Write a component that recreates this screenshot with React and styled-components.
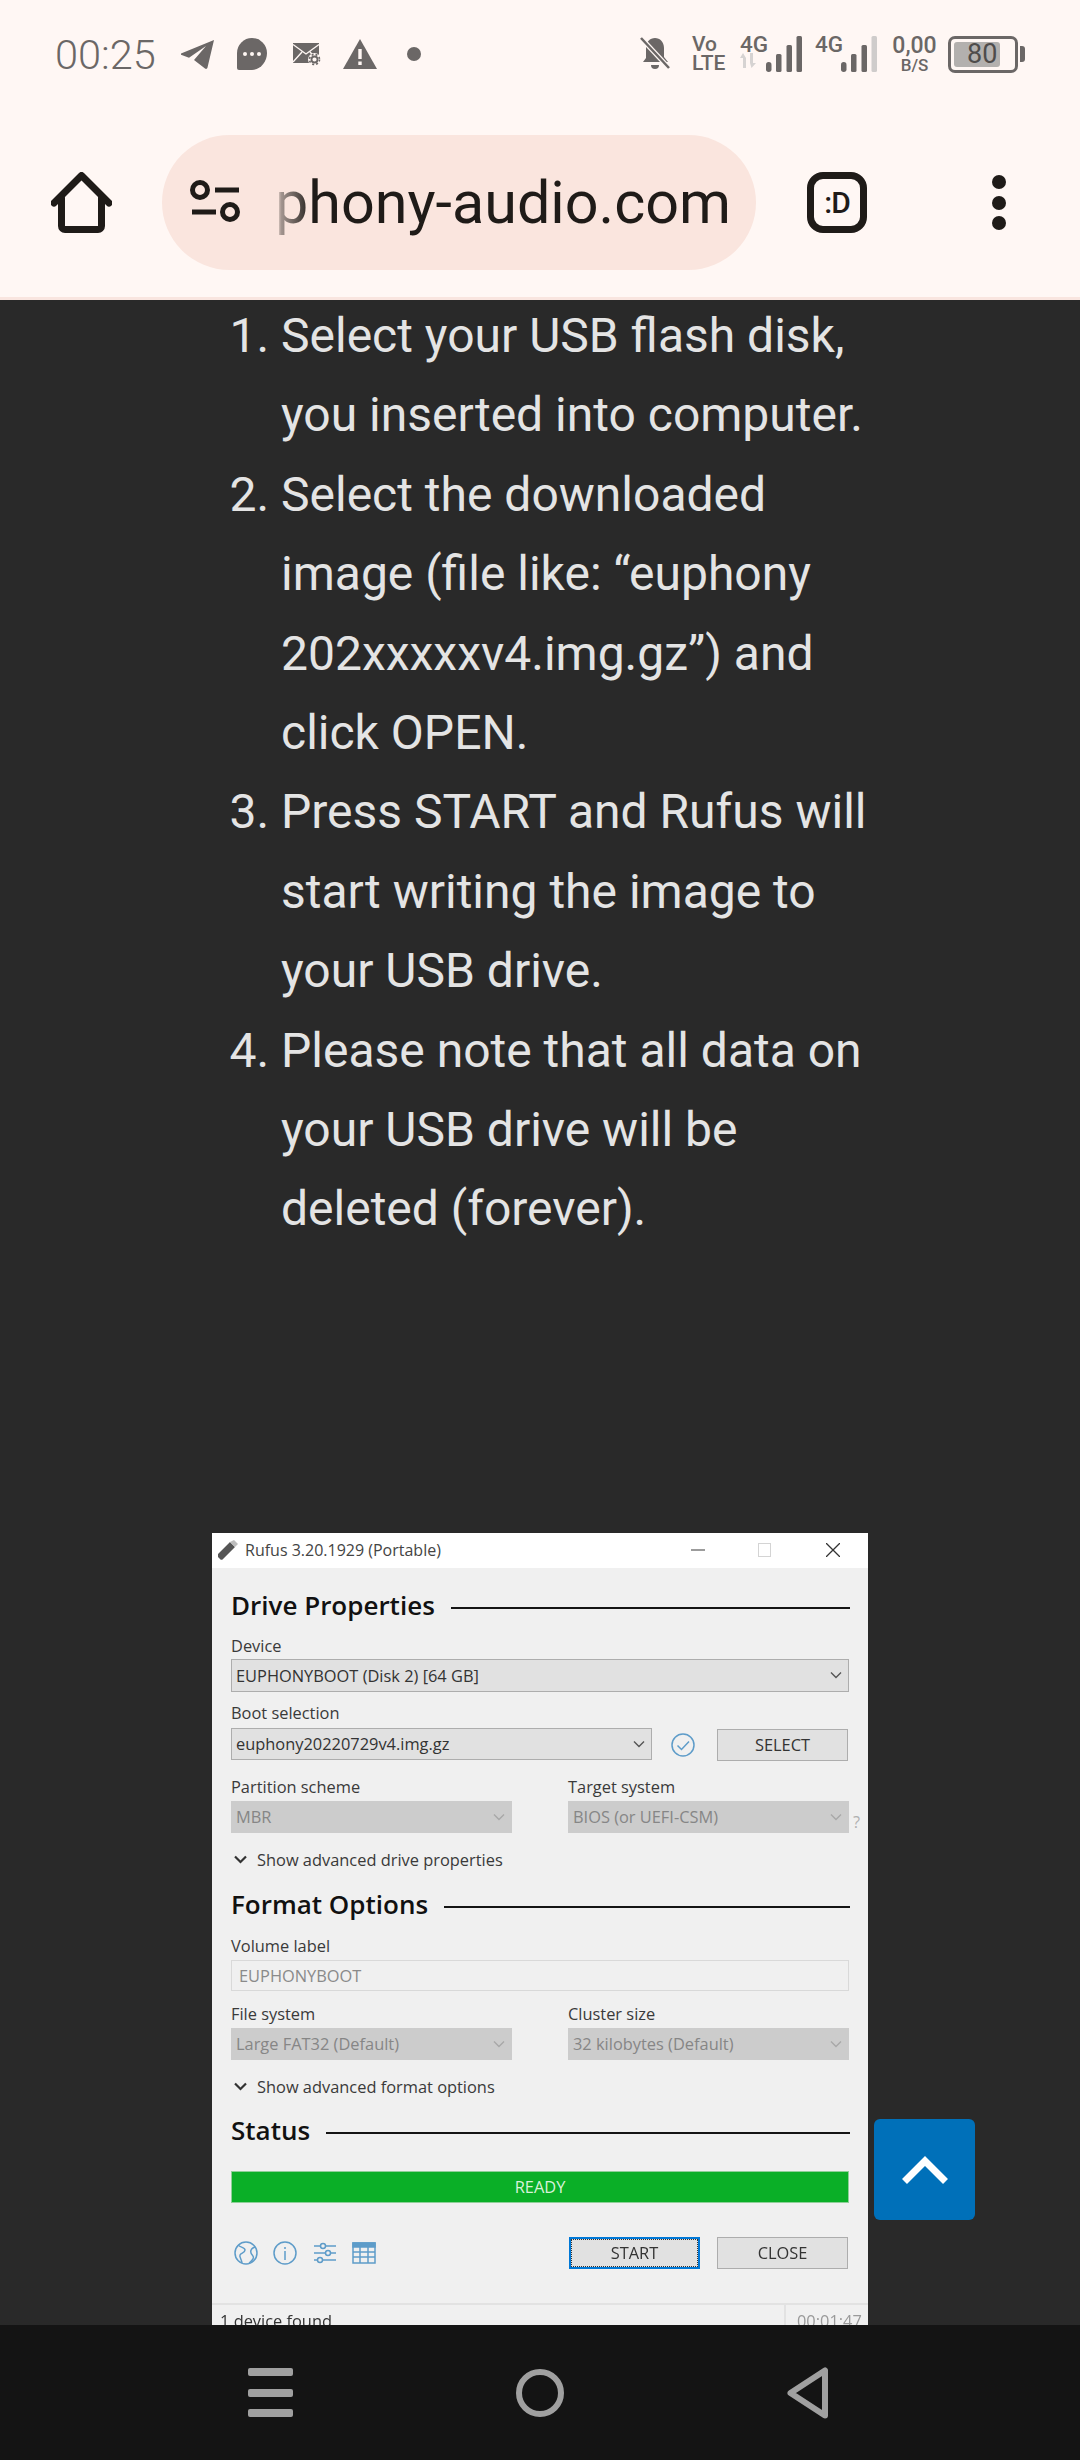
import React from "react";
import styled, { createGlobalStyle } from "styled-components";

const GlobalStyle = createGlobalStyle`
  html, body {
    margin: 0;
    padding: 0;
    background: #292929;
  }
  * {
    box-sizing: border-box;
  }
`;

const Screen = styled.div`
  width: 1080px;
  height: 2460px;
  display: flex;
  flex-direction: column;
  overflow: hidden;
  font-family: Roboto, "Liberation Sans", sans-serif;
`;

/* browser chrome */
const Header = styled.header`
  height: 300px;
  flex: none;
  background: #fff7f4;
  border-bottom: 3px solid #f9e5df;
`;

const StatusBar = styled.div`
  height: 108px;
  padding: 0 55px 0 55px;
  display: flex;
  align-items: center;
  justify-content: space-between;
  color: #6b6766;
`;

const StatusGroup = styled.div`
  display: flex;
  align-items: center;
`;

const Time = styled.span`
  font-size: 41.5px;
  font-weight: 300;
  width: 101px;
  margin-right: 25px;
  white-space: nowrap;
`;

const StatusIcon = styled.svg`
  display: block;
  flex: none;
  margin-right: ${(props) => props.$gap || 0}px;
  fill: currentColor;
`;

const StackText = styled.div`
  display: flex;
  flex-direction: column;
  align-items: ${(props) => props.$align || "flex-start"};
  width: ${(props) => props.$width}px;
  margin-right: ${(props) => props.$gap}px;
  font-weight: 500;
  line-height: 1;
`;

const StackLine = styled.span`
  font-size: ${(props) => props.$size}px;
  height: ${(props) => props.$height}px;
  line-height: ${(props) => props.$height}px;
`;

const Network = styled.div`
  display: flex;
  align-items: flex-end;
  margin-right: ${(props) => props.$gap}px;
`;

const NetworkLabel = styled.div`
  width: 26px;
  height: 36px;
  font-size: 22.5px;
  font-weight: 500;
  line-height: 17px;
  white-space: nowrap;
`;

const Battery = styled.div`
  width: 70px;
  height: 37px;
  padding: 3px;
  border: 3px solid #6b6766;
  border-radius: 7px;
`;

const BatteryFill = styled.div`
  width: 46px;
  height: 25px;
  background: #b3b0ae;
  border-radius: 3px;
  font-size: 27px;
  line-height: 25px;
  color: #4f4c4b;
  white-space: nowrap;
  padding-left: 13px;
`;

const BatteryTip = styled.div`
  width: 5px;
  height: 16px;
  margin-left: 2px;
  background: #6b6766;
  border-radius: 0 3px 3px 0;
`;

const Toolbar = styled.div`
  height: 135px;
  margin-top: 27px;
  padding-left: 51px;
  display: flex;
  align-items: center;
  color: #1f1b18;
`;

const UrlPill = styled.div`
  position: relative;
  width: 594px;
  height: 135px;
  margin: 0 51px 0 50px;
  padding-left: 28px;
  display: flex;
  align-items: center;
  background: #fae5de;
  border-radius: 68px;
`;

const UrlText = styled.span`
  margin-left: 34px;
  font-size: 59.3px;
  color: #1f1b18;
  white-space: nowrap;
`;

const UrlFade = styled.div`
  position: absolute;
  left: 114px;
  top: 30px;
  width: 36px;
  height: 75px;
  background: linear-gradient(90deg, #fae5de 0%, rgba(250, 229, 222, 0.6) 15%, rgba(250, 229, 222, 0) 100%);
`;

const TabCount = styled.div`
  width: 60px;
  height: 61px;
  flex: none;
  border: 7px solid #1f1b18;
  border-radius: 16px;
  display: flex;
  align-items: center;
  justify-content: center;
  font-size: 30px;
  font-weight: 500;
  letter-spacing: -1px;
`;

const MenuDots = styled.div`
  margin-left: 125px;
  display: flex;
  flex-direction: column;
  gap: 6.5px;
`;

const MenuDot = styled.span`
  display: block;
  width: 14px;
  height: 14px;
  border-radius: 50%;
  background: ${(props) => props.$color || "#1f1b18"};
`;

/* page content */
const Main = styled.main`
  position: relative;
  flex: 1;
  min-height: 0;
  overflow: hidden;
  background: #292929;
`;

const Steps = styled.ol`
  width: 600px;
  margin: -4px 0 0 281px;
  padding: 0;
  font-size: 48px;
  line-height: 79.4px;
  color: #e4e4e4;
`;

const BackToTop = styled.div`
  position: absolute;
  left: 874px;
  top: 1819px;
  width: 101px;
  height: 101px;
  display: flex;
  align-items: center;
  justify-content: center;
  background: #0070b9;
  border-radius: 6px;
`;

/* rufus screenshot */
const Win = styled.div`
  width: 656px;
  margin: 284px 0 0 212px;
  background: #f0f0f0;
  font-family: "Open Sans", "Noto Sans", sans-serif;
  font-size: 16.4px;
  color: #333;
  filter: blur(0.35px);
`;

const TitleBar = styled.div`
  height: 35px;
  background: #fff;
  display: flex;
  align-items: center;
  padding-left: 5px;
  font-size: 16px;
  line-height: 32px;
`;

const TitleText = styled.span`
  margin-left: 6px;
  flex: 1;
  color: #444;
`;

const WinButton = styled.svg`
  display: block;
  flex: none;
  margin-right: ${(props) => props.$gap}px;
`;

const WinBody = styled.div`
  padding: 22px 19px 0;
`;

const SectionHead = styled.div`
  display: flex;
  align-items: center;
  gap: 16px;
  height: 34px;
  margin-top: ${(props) => props.$mt || 0}px;
  margin-right: -1px;
`;

const SectionTitle = styled.h2`
  margin: 0 0 3px;
  font-size: 26px;
  font-weight: 600;
  line-height: 31px;
  color: #111;
  white-space: nowrap;
`;

const SectionLine = styled.div`
  flex: 1;
  height: 2px;
  margin-top: 3px;
  background: #151515;
`;

const FieldLabel = styled.div`
  height: 22px;
  line-height: 20px;
  margin-top: ${(props) => props.$mt || 0}px;
  margin-bottom: ${(props) => props.$mb ?? 2}px;
  color: #3a3a3a;
`;

const Combo = styled.div`
  flex: ${(props) => (props.$grow ? 1 : "none")};
  height: ${(props) => props.$height || 32}px;
  padding: 0 6px 0 4px;
  display: flex;
  align-items: center;
  justify-content: space-between;
  background: ${(props) => (props.$disabled ? "#cccccc" : "#e1e1e1")};
  border: 1px solid ${(props) => (props.$disabled ? "#cccccc" : "#adadad")};
  color: ${(props) => (props.$disabled ? "#868686" : "#333")};
  white-space: nowrap;
`;

const TextInput = styled.div`
  height: 31px;
  padding-left: 7px;
  display: flex;
  align-items: center;
  background: #f0f0f0;
  border: 1px solid #d9d9d9;
  color: #8a8a8a;
`;

const ChevronIcon = styled.svg`
  display: block;
  flex: none;
  fill: none;
  stroke: ${(props) => (props.$disabled ? "#a8a8a8" : "#555")};
  stroke-width: 1.4;
`;

const BootRow = styled.div`
  display: flex;
  align-items: flex-start;
`;

const BootCombo = styled(Combo)`
  width: 421px;
  flex: none;
`;

const CheckIcon = styled.svg`
  display: block;
  flex: none;
  margin: 5px 22px 0 19px;
`;

const PushButton = styled.div`
  width: 131px;
  height: 32px;
  display: flex;
  align-items: center;
  justify-content: center;
  background: #e1e1e1;
  border: 1px solid #adadad;
  color: #333;
  margin-top: ${(props) => props.$mt || 0}px;
`;

const StartButton = styled(PushButton)`
  border: 2px solid #0078d7;
  outline: 1px dotted #333;
  outline-offset: -3px;
`;

const TwoColumns = styled.div`
  position: relative;
  display: grid;
  grid-template-columns: 281px 281px;
  column-gap: 56px;
  margin-top: ${(props) => props.$mt || 0}px;
`;

const HelpMark = styled.span`
  position: absolute;
  left: 622px;
  top: 33px;
  color: #b0b0b0;
`;

const Disclosure = styled.div`
  display: flex;
  align-items: center;
  height: 22px;
  margin-top: 16px;
  padding-left: 3px;
  gap: 10px;
  line-height: 20px;
  color: #3a3a3a;
`;

const ReadyBar = styled.div`
  height: 32px;
  margin-top: 22px;
  display: flex;
  align-items: center;
  justify-content: center;
  background: #0aaf27;
  border: 1px solid #8fcf98;
  color: #d8f2da;
`;

const ActionRow = styled.div`
  margin-top: 34px;
  display: flex;
  align-items: center;
`;

const ToolIcons = styled.div`
  flex: 1;
  display: flex;
  align-items: center;
  gap: 15.3px;
  padding-left: 3px;
`;

const ToolIcon = styled.svg`
  display: block;
  flex: none;
  fill: none;
  stroke: #5e9cc9;
  stroke-width: 1.5;
`;

const ActionButtons = styled.div`
  display: flex;
  gap: 17px;
  margin-right: 1px;
`;

const WinStatus = styled.div`
  margin-top: 34px;
  height: 40px;
  border-top: 2px solid #e2e2e2;
  display: flex;
  align-items: flex-start;
  justify-content: space-between;
  padding-left: 8px;
  line-height: 32px;
  color: #333;
`;

const Elapsed = styled.div`
  width: 84px;
  height: 40px;
  padding-left: 11px;
  border-left: 2px solid #e2e2e2;
  color: #9a9a9a;
`;

/* android nav */
const NavBar = styled.nav`
  position: relative;
  height: 135px;
  flex: none;
  background: #141414;
  display: flex;
  align-items: center;
  padding-left: 248px;
`;

const NavIcon = styled.svg`
  display: block;
  flex: none;
  margin-right: ${(props) => props.$gap || 0}px;
`;

const Chevron = ({ disabled }) => (
  <ChevronIcon $disabled={disabled} width="12" height="8" viewBox="0 0 12 8">
    <path d="M1 1.5l5 5 5-5" />
  </ChevronIcon>
);

const NetworkBars = ({ dim }) => (
  <StatusIcon width="36" height="36" viewBox="0 0 36 36">
    <rect x="0" y="26" width="5.5" height="10" rx="2.7" />
    <rect x="10" y="18" width="5.5" height="18" rx="1.5" />
    <rect x="20.5" y="9" width="5.5" height="27" rx="1.5" />
    <rect x="30.5" y="0" width="5.5" height="36" rx="1.5" fill={dim ? "#cfcccb" : "currentColor"} />
  </StatusIcon>
);

const DisclosureArrow = () => (
  <svg width="13" height="9" viewBox="0 0 13 9" fill="none" stroke="#333" strokeWidth="2.200">
    <path d="M1 1.500l5.500 5.500L12 1.500" />
  </svg>
);

export default function App() {
  return (
    <Screen>
      <GlobalStyle />
      <Header>
        <StatusBar>
          <StatusGroup>
            <Time>00:25</Time>
            <StatusIcon $gap={22} width="34" height="31" viewBox="0 0 34 31">
              <path d="M33 1 0 14.5c-.6.3-.6 1 0 1.3l8 3L25 7 13 21l11 8.500c1 .8 2.300.3 2.500-1z" />
            </StatusIcon>
            <StatusIcon $gap={26} width="30" height="32" viewBox="0 0 30 32">
              <path d="M15 0a15 15 0 0 1 15 15c0 9-7 17-15 17H2a2 2 0 0 1-2-2V15A15 15 0 0 1 15 0z" />
              <circle cx="8" cy="16" r="2" fill="#fff7f4" />
              <circle cx="15" cy="16" r="2" fill="#fff7f4" />
              <circle cx="22" cy="16" r="2" fill="#fff7f4" />
            </StatusIcon>
            <StatusIcon $gap={22} width="28" height="24" viewBox="0 0 28 24">
              <rect x="0" y="1" width="26" height="20" />
              <path d="M0 2.500 13 12 26 2.500M0 20l9-10M26 20l-9-10" fill="none" stroke="#fff7f4" strokeWidth="1.400" />
              <circle cx="21.500" cy="17.500" r="6.500" fill="#fff7f4" />
              <circle cx="21.500" cy="17.500" r="3" fill="none" stroke="currentColor" strokeWidth="1.800" />
              <circle cx="21.500" cy="17.500" r="5" fill="none" stroke="currentColor" strokeWidth="1.600" strokeDasharray="2 2" />
            </StatusIcon>
            <StatusIcon $gap={30} width="34" height="30" viewBox="0 0 34 30">
              <path d="M17 0 34 30H0z" />
              <rect x="15.300" y="10" width="3.400" height="10" fill="#fff7f4" />
              <rect x="15.300" y="22.500" width="3.400" height="3.500" fill="#fff7f4" />
            </StatusIcon>
            <MenuDot $color="#6b6766" />
          </StatusGroup>
          <StatusGroup>
            <StatusIcon $gap={22} width="30" height="34" viewBox="0 0 30 34">
              <path d="M15 1c5 0 9 4 9 10v9l4 5H3l3-4V10c0-5 4-9 9-9z" />
              <path d="M11 28h8a4 4 0 0 1-8 0z" />
              <path d="M1 1l28 30" stroke="#fff7f4" strokeWidth="5" />
              <path d="M1 1l28 30" stroke="currentColor" strokeWidth="2.500" />
            </StatusIcon>
            <StackText $width={33} $gap={15}>
              <StackLine $size={21} $height={19}>Vo</StackLine>
              <StackLine $size={21} $height={19}>LTE</StackLine>
            </StackText>
            <Network $gap={13}>
              <NetworkLabel>
                4G
                <StatusIcon width="16" height="15" viewBox="0 0 16 15" fill="#d6d3d2" style={{ color: "#d6d3d2" }}>
                  <path d="M3 0 6 5v10H3V5H0zM10 0h3v10h3l-4.500 5L10 10z" />
                </StatusIcon>
              </NetworkLabel>
              <NetworkBars />
            </Network>
            <Network $gap={15}>
              <NetworkLabel>4G</NetworkLabel>
              <NetworkBars dim />
            </Network>
            <StackText $width={45} $gap={11} $align="center">
              <StackLine $size={23} $height={22}>0,00</StackLine>
              <StackLine $size={17} $height={16}>B/S</StackLine>
            </StackText>
            <Battery>
              <BatteryFill>80</BatteryFill>
            </Battery>
            <BatteryTip />
          </StatusGroup>
        </StatusBar>
        <Toolbar>
          <svg width="61" height="61" viewBox="0 0 61 61" fill="none" stroke="#1f1b18" strokeWidth="7" strokeLinejoin="round" strokeLinecap="round">
            <path d="M3 31 30.500 3.500 58 31" />
            <path d="M10.500 26v28a3.500 3.500 0 0 0 3.500 3.500h33a3.500 3.500 0 0 0 3.500-3.500V26" />
          </svg>
          <UrlPill>
            <svg width="51" height="45" viewBox="0 0 51 45" fill="none" stroke="#1f1b18" strokeWidth="5">
              <circle cx="10" cy="10" r="7.500" />
              <path d="M25 10h24" />
              <path d="M2 32h24" />
              <circle cx="40" cy="32" r="7.500" />
            </svg>
            <UrlText>phony-audio.com</UrlText>
            <UrlFade />
          </UrlPill>
          <TabCount>:D</TabCount>
          <MenuDots>
            <MenuDot />
            <MenuDot />
            <MenuDot />
          </MenuDots>
        </Toolbar>
      </Header>

      <Main>
        <Steps>
          <li>Select your USB flash disk, you inserted into computer.</li>
          <li>Select the downloaded image (file like: “euphony 202xxxxxv4.img.gz”) and click OPEN.</li>
          <li>Press START and Rufus will start writing the image to your USB drive.</li>
          <li>Please note that all data on your USB drive will be deleted (forever).</li>
        </Steps>

        <Win>
          <TitleBar>
            <svg width="22" height="22" viewBox="0 0 22 22">
              <path d="M1 15 13 3l5 5L6 20a2 2 0 0 1-3 0l-2-2z" fill="#555" />
              <path d="M13 3l4-2 4 4-3 3z" fill="#bdbdbd" />
            </svg>
            <TitleText>Rufus 3.20.1929 (Portable)</TitleText>
            <WinButton $gap={53} width="14" height="14" viewBox="0 0 14 14">
              <path d="M0 7h14" stroke="#666" strokeWidth="1.300" />
            </WinButton>
            <WinButton $gap={55} width="13" height="14" viewBox="0 0 13 14">
              <rect x=".5" y=".5" width="12" height="13" fill="none" stroke="#d4d4d4" />
            </WinButton>
            <WinButton $gap={28} width="14" height="14" viewBox="0 0 14 14">
              <path d="M0 0l14 14M14 0 0 14" stroke="#333" strokeWidth="1.300" />
            </WinButton>
          </TitleBar>
          <WinBody>
            <SectionHead>
              <SectionTitle>Drive Properties</SectionTitle>
              <SectionLine />
            </SectionHead>
            <FieldLabel $mt={12} $mb={1}>Device</FieldLabel>
            <Combo $height={33}>
              EUPHONYBOOT (Disk 2) [64 GB]
              <Chevron />
            </Combo>
            <FieldLabel $mt={11} $mb={3}>Boot selection</FieldLabel>
            <BootRow>
              <BootCombo>
                euphony20220729v4.img.gz
                <Chevron />
              </BootCombo>
              <CheckIcon width="24" height="24" viewBox="0 0 24 24" fill="none" stroke="#5e9cc9" strokeWidth="1.500">
                <circle cx="12" cy="12" r="11" />
                <path d="M6.500 12.500l4 4 7.500-8" />
              </CheckIcon>
              <PushButton $mt={1}>SELECT</PushButton>
            </BootRow>
            <TwoColumns $mt={16}>
              <div>
                <FieldLabel>Partition scheme</FieldLabel>
                <Combo $disabled>
                  MBR
                  <Chevron disabled />
                </Combo>
              </div>
              <div>
                <FieldLabel>Target system</FieldLabel>
                <Combo $disabled>
                  BIOS (or UEFI-CSM)
                  <Chevron disabled />
                </Combo>
              </div>
              <HelpMark>?</HelpMark>
            </TwoColumns>
            <Disclosure>
              <DisclosureArrow />
              Show advanced drive properties
            </Disclosure>
            <SectionHead $mt={18}>
              <SectionTitle>Format Options</SectionTitle>
              <SectionLine />
            </SectionHead>
            <FieldLabel $mt={13}>Volume label</FieldLabel>
            <TextInput>EUPHONYBOOT</TextInput>
            <TwoColumns $mt={13}>
              <div>
                <FieldLabel>File system</FieldLabel>
                <Combo $disabled>
                  Large FAT32 (Default)
                  <Chevron disabled />
                </Combo>
              </div>
              <div>
                <FieldLabel>Cluster size</FieldLabel>
                <Combo $disabled>
                  32 kilobytes (Default)
                  <Chevron disabled />
                </Combo>
              </div>
            </TwoColumns>
            <Disclosure>
              <DisclosureArrow />
              Show advanced format options
            </Disclosure>
            <SectionHead $mt={17}>
              <SectionTitle>Status</SectionTitle>
              <SectionLine />
            </SectionHead>
            <ReadyBar>READY</ReadyBar>
            <ActionRow>
              <ToolIcons>
                <ToolIcon width="24" height="24" viewBox="0 0 24 24">
                  <circle cx="12" cy="12" r="11" />
                  <path d="M4 4c3 3 7 2 7 5s-4 3-5 5 2 5 2 8M21 6c-3 1-5 3-4 6s4 3 2 6-3 3-4 4" />
                </ToolIcon>
                <ToolIcon width="24" height="24" viewBox="0 0 24 24">
                  <circle cx="12" cy="12" r="11" />
                  <path d="M12 10v9M12 6v2" />
                </ToolIcon>
                <ToolIcon width="24" height="24" viewBox="0 0 24 24">
                  <path d="M1 5h22M1 12h22M1 19h22" />
                  <circle cx="10" cy="5" r="2.500" fill="#f0f0f0" />
                  <circle cx="15" cy="12" r="2.500" fill="#f0f0f0" />
                  <circle cx="7" cy="19" r="2.500" fill="#f0f0f0" />
                </ToolIcon>
                <ToolIcon width="24" height="24" viewBox="0 0 24 24">
                  <rect x="1" y="2" width="22" height="20" />
                  <rect x="1" y="2" width="22" height="4" fill="#5e9cc9" />
                  <path d="M1 11h22M1 16h22M8 6v16M16 6v16" />
                </ToolIcon>
              </ToolIcons>
              <ActionButtons>
                <StartButton>START</StartButton>
                <PushButton>CLOSE</PushButton>
              </ActionButtons>
            </ActionRow>
          </WinBody>
          <WinStatus>
            1 device found
            <Elapsed>00:01:47</Elapsed>
          </WinStatus>
        </Win>

        <BackToTop>
          <svg width="46" height="28" viewBox="0 0 46 28" fill="none" stroke="#fff" strokeWidth="7">
            <path d="M2.500 25.500 23 5l20.500 20.500" />
          </svg>
        </BackToTop>
      </Main>

      <NavBar>
        <NavIcon $gap={223} width="45" height="49" viewBox="0 0 45 49" fill="#a0a0a0">
          <rect y="0" width="45" height="8" rx="2" />
          <rect y="21" width="45" height="8" rx="2" />
          <rect y="41" width="45" height="8" rx="2" />
        </NavIcon>
        <NavIcon $gap={223} width="48" height="48" viewBox="0 0 48 48" fill="none" stroke="#a0a0a0" strokeWidth="6">
          <circle cx="24" cy="24" r="21" />
        </NavIcon>
        <NavIcon width="42" height="52" viewBox="0 0 42 52" fill="none" stroke="#a0a0a0" strokeWidth="6" strokeLinejoin="round">
          <path d="M38 3.500v45L3.500 26z" />
        </NavIcon>
      </NavBar>
    </Screen>
  );
}
